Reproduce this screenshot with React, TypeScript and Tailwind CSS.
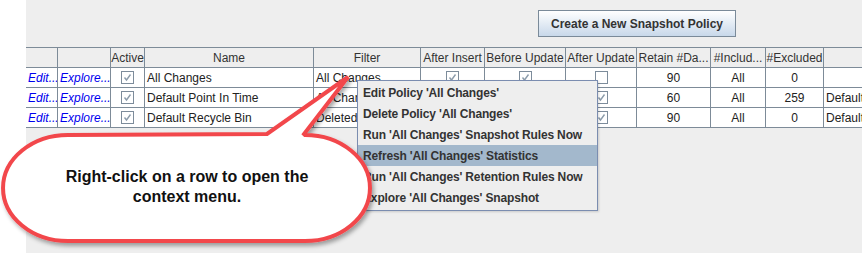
import React from "react";

const COLS = [32, 53, 34, 169, 107, 64, 81, 71, 74, 55, 58, 60];

function Check({ checked }: { checked: boolean }) {
  return (
    <div className="w-[13px] h-[13px] border border-[#7d8c9b] bg-white flex items-center justify-center">
      {checked && (
        <svg width="9" height="9" viewBox="0 0 9 9">
          <path d="M1.5 4.5 L3.5 7 L7.5 1.5" stroke="#8c9cab" strokeWidth="1.4" fill="none" />
        </svg>
      )}
    </div>
  );
}

type Cell = { kind: "link" | "check" | "text" | "num"; v?: string; c?: boolean };

const rows: Cell[][] = [
  [
    { kind: "link", v: "Edit..." },
    { kind: "link", v: "Explore..." },
    { kind: "check", c: true },
    { kind: "text", v: "All Changes" },
    { kind: "text", v: "All Changes" },
    { kind: "check", c: true },
    { kind: "check", c: true },
    { kind: "check", c: false },
    { kind: "num", v: "90" },
    { kind: "num", v: "All" },
    { kind: "num", v: "0" },
    { kind: "text", v: "" },
  ],
  [
    { kind: "link", v: "Edit..." },
    { kind: "link", v: "Explore..." },
    { kind: "check", c: true },
    { kind: "text", v: "Default Point In Time" },
    { kind: "text", v: "All Changes" },
    { kind: "check", c: true },
    { kind: "check", c: true },
    { kind: "check", c: true },
    { kind: "num", v: "60" },
    { kind: "num", v: "All" },
    { kind: "num", v: "259" },
    { kind: "text", v: "Default" },
  ],
  [
    { kind: "link", v: "Edit..." },
    { kind: "link", v: "Explore..." },
    { kind: "check", c: true },
    { kind: "text", v: "Default Recycle Bin" },
    { kind: "text", v: "Deleted Rows" },
    { kind: "check", c: true },
    { kind: "check", c: true },
    { kind: "check", c: true },
    { kind: "num", v: "90" },
    { kind: "num", v: "All" },
    { kind: "num", v: "0" },
    { kind: "text", v: "Default" },
  ],
];

const headers = [
  "",
  "",
  "Active",
  "Name",
  "Filter",
  "After Insert",
  "Before Update",
  "After Update",
  "Retain #Da...",
  "#Includ...",
  "#Excluded",
  "",
];

const menuItems = [
  "Edit Policy 'All Changes'",
  "Delete Policy 'All Changes'",
  "Run 'All Changes' Snapshot Rules Now",
  "Refresh 'All Changes' Statistics",
  "Run 'All Changes' Retention Rules Now",
  "Explore 'All Changes' Snapshot",
];

export default function App() {
  return (
    <div
      className="relative w-[862px] h-[253px] overflow-hidden bg-white flex text-[12px] text-[#222]"
      style={{ fontFamily: '"Liberation Sans", Arial, sans-serif' }}
    >
      <div className="w-[26px] shrink-0 bg-white" />
      <div className="flex-1 bg-[#eeeeee] flex flex-col overflow-hidden">
        <div className="ml-[512px] mt-[10px] mb-[10px] w-[198px] h-[27px] border border-[#7a8a99] bg-gradient-to-b from-[#ffffff] to-[#c8d8ea] flex items-center justify-center font-bold text-[#333] text-[12px]">
          Create a New Snapshot Policy
        </div>
        <div className="border-t border-[#7d8b98] w-[900px]">
          <div className="flex h-[20px] border-b border-[#7d8b98]">
            {headers.map((h, i) => (
              <div
                key={i}
                style={{ width: COLS[i] }}
                className="shrink-0 border-r border-[#7d8b98] flex items-center justify-center text-[#333] whitespace-nowrap overflow-hidden"
              >
                {h}
              </div>
            ))}
          </div>
          {rows.map((r, ri) => (
            <div key={ri} className="flex h-[20px] border-b border-[#7d8b98] bg-white">
              {r.map((c, i) => (
                <div
                  key={i}
                  style={{ width: COLS[i] }}
                  className={
                    "shrink-0 border-r border-[#7d8b98] flex items-center whitespace-nowrap overflow-hidden " +
                    (c.kind === "check" || c.kind === "num" ? "justify-center" : "pl-[2px]")
                  }
                >
                  {c.kind === "link" && <span className="italic text-[#0000ee]">{c.v}</span>}
                  {c.kind === "check" && <Check checked={!!c.c} />}
                  {(c.kind === "text" || c.kind === "num") && <span>{c.v}</span>}
                </div>
              ))}
            </div>
          ))}
        </div>
      </div>

      {/* Context menu */}
      <div className="absolute left-[357px] top-[80px] w-[241px] h-[131px] border border-[#7b8db0] bg-[#eeeeee] py-[1px] shadow-[1px_1px_2px_rgba(0,0,0,0.15)]">
        {menuItems.map((m, i) => (
          <div
            key={i}
            className={
              "h-[21px] flex items-center pl-[5px] font-bold text-[#333] tracking-[-0.15px] whitespace-nowrap " +
              (i === 3 ? "bg-[#a3b8cc]" : "")
            }
          >
            {m}
          </div>
        ))}
      </div>

      {/* Callout */}
      <svg className="absolute left-0 top-0" width="400" height="253" viewBox="0 0 400 253">
        <defs>
          <filter id="sh" x="-10%" y="-10%" width="130%" height="140%">
            <feDropShadow dx="2" dy="3" stdDeviation="2" floodColor="#000" floodOpacity="0.35" />
          </filter>
        </defs>
        <path
          d="M 68 135 L 267 134 L 348 77 L 304 134 L 305 135 A 65 53 0 0 1 305 241 L 68 241 A 65 53 0 0 1 68 135 Z"
          fill="#ffffff"
          stroke="#f2474b"
          strokeWidth="4"
          strokeLinejoin="miter"
          filter="url(#sh)"
        />
      </svg>
      <div className="absolute left-[4px] top-[167px] w-[366px] text-center font-bold text-[16px] leading-[20px] text-[#111]">
        Right-click on a row to open the
        <br />
        context menu.
      </div>
    </div>
  );
}
